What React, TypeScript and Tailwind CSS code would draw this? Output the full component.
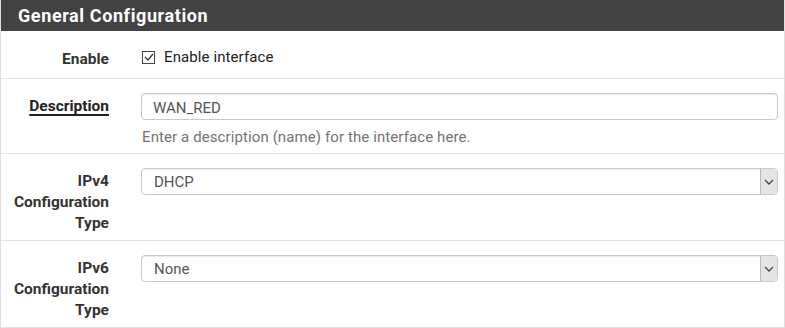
import React from 'react';

const FONT = { fontFamily: 'Roboto, "Liberation Sans", sans-serif' };

const Chevron = () => (
  <svg width="10" height="6" viewBox="0 0 10 6" fill="none">
    <path d="M1 1l4 4 4-4" stroke="#444" strokeWidth="1.3" />
  </svg>
);

const Select = ({ value }: { value: string }) => (
  <div className="flex h-[27px] items-stretch rounded-[4px] border border-[#c8c8c8] bg-white shadow-[inset_0_1px_1px_rgba(0,0,0,0.08)]">
    <span className="flex-1 pl-[12px] pt-[1px] text-[15px] leading-[25px] text-[#555]">{value}</span>
    <span className="flex w-[17px] items-center justify-center rounded-r-[3px] border-l border-[#bbb] bg-[#e4e4e4]">
      <Chevron />
    </span>
  </div>
);

const LabelLines = ({ lines }: { lines: string[] }) => (
  <div className="w-[108px] shrink-0 pt-[17px] text-right text-[15.5px] font-bold leading-[21px] text-[#333]">
    {lines.map((l) => (
      <div key={l}>{l}</div>
    ))}
  </div>
);

export default function App() {
  return (
    <div className="w-[785px] h-[328px] overflow-hidden bg-white border-x border-[#ddd]" style={FONT}>
      <div className="h-[31px] bg-[#424242] pl-[17px] text-[18px] font-bold leading-[31px] tracking-[0.6px] text-white">
        General Configuration
      </div>

      {/* Enable */}
      <div className="flex h-[48px] border-b border-[#e3e3e3]">
        <div className="w-[108px] shrink-0 pt-[18px] text-right text-[15.5px] font-bold leading-[20px] text-[#333]">Enable</div>
        <div className="ml-[33px] flex items-center gap-[9px] pt-[5px]">
          <span className="flex h-[13px] w-[13px] items-center justify-center border border-[#444] bg-white">
            <svg width="10" height="8" viewBox="0 0 10 8" fill="none">
              <path d="M1 4l3 3 5-6" stroke="#333" strokeWidth="1.2" />
            </svg>
          </span>
          <span className="text-[15px] tracking-[0.1px] text-[#222]">Enable interface</span>
        </div>
      </div>

      {/* Description */}
      <div className="flex h-[75px] border-b border-[#e3e3e3]">
        <div className="w-[108px] shrink-0 pt-[17px] text-right text-[15.5px] font-bold leading-[20px] text-[#222]">
          <span className="underline decoration-2 underline-offset-[3px]">Description</span>
        </div>
        <div className="ml-[32px] mr-[6px] flex-1 pt-[14px]">
          <div className="h-[27px] rounded-[4px] border border-[#c8c8c8] pl-[11px] pt-[2px] text-[15px] leading-[25px] text-[#555] shadow-[inset_0_1px_1px_rgba(0,0,0,0.08)]">
            WAN_RED
          </div>
          <div className="mt-[7px] pl-[1px] text-[15px] tracking-[0.1px] leading-[20px] text-[#737373]">
            Enter a description (name) for the interface here.
          </div>
        </div>
      </div>

      {/* IPv4 */}
      <div className="flex h-[87px] border-b border-[#e3e3e3]">
        <LabelLines lines={['IPv4', 'Configuration', 'Type']} />
        <div className="ml-[32px] mr-[6px] flex-1 pt-[14px]">
          <Select value="DHCP" />
        </div>
      </div>

      {/* IPv6 */}
      <div className="flex h-[87px] border-b border-[#e3e3e3]">
        <LabelLines lines={['IPv6', 'Configuration', 'Type']} />
        <div className="ml-[32px] mr-[6px] flex-1 pt-[14px]">
          <Select value="None" />
        </div>
      </div>
    </div>
  );
}
